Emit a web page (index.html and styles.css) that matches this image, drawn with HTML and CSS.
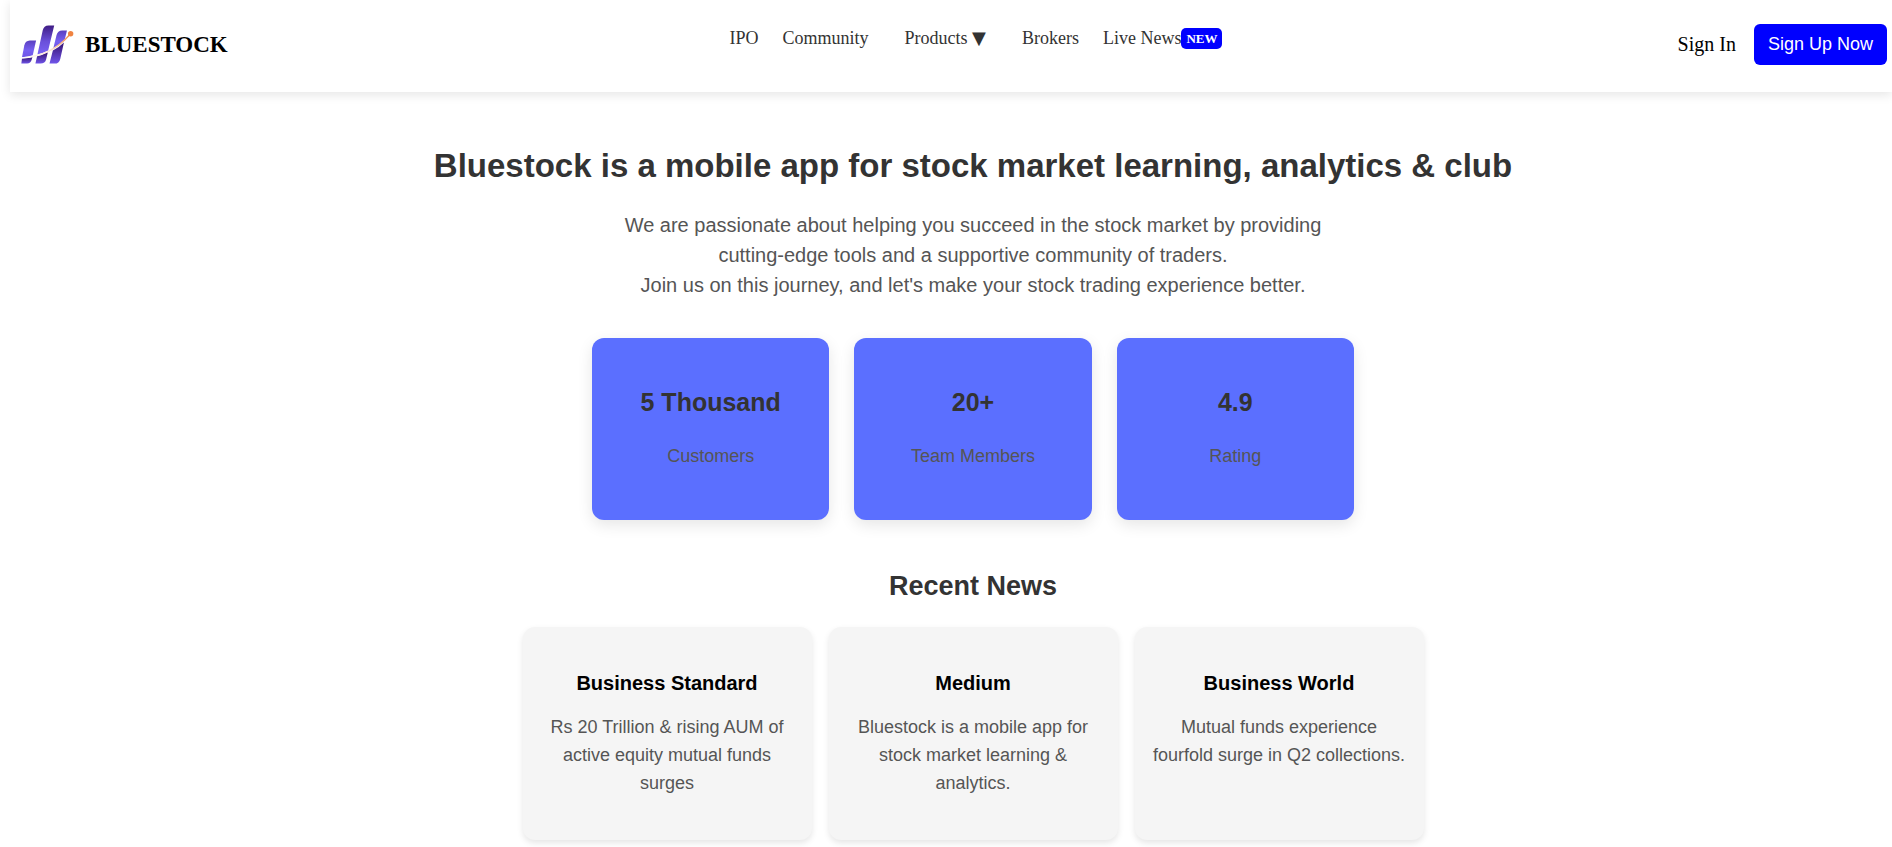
FILE: index.html
```html
<!DOCTYPE html>
<html lang="en">
<head>
<meta charset="utf-8">
<meta name="viewport" content="width=device-width, initial-scale=1">
<title>Bluestock</title>
<link rel="stylesheet" href="styles.css">
</head>
<body>
<header class="header">
  <div class="brand">
    <svg class="brand-logo" viewBox="62 77 158 116" aria-hidden="true">
      <defs>
        <linearGradient id="rise" x1="0" y1="0" x2="0" y2="1">
          <stop offset="0" stop-color="#5a3fc0"/>
          <stop offset="0.6" stop-color="#7760f2"/>
          <stop offset="1" stop-color="#6f55e6"/>
        </linearGradient>
        <linearGradient id="top" x1="0" y1="0" x2="0" y2="1">
          <stop offset="0" stop-color="#3f1c84"/>
          <stop offset="0.55" stop-color="#6a50da"/>
          <stop offset="1" stop-color="#7a62f4"/>
        </linearGradient>
        <linearGradient id="base" x1="0" y1="0" x2="0" y2="1">
          <stop offset="0" stop-color="#35126f"/>
          <stop offset="1" stop-color="#7055ea"/>
        </linearGradient>
        <linearGradient id="trail" x1="0" y1="0" x2="1" y2="0">
          <stop offset="0" stop-color="#ffffff"/>
          <stop offset="0.6" stop-color="#fde3d2"/>
          <stop offset="1" stop-color="#f28a45"/>
        </linearGradient>
      </defs>
      <path fill="url(#rise)" d="M72 137Q75 124 88 123H107L97 167Q83 172 65 173Z"/>
      <path fill="url(#base)" d="M65 177Q82 176 96 172L94 180Q91 192 80 192H63Z"/>
      <path fill="url(#top)" d="M127 92Q130 78 144 78H161L143 153Q128 161 111 165Z"/>
      <path fill="url(#base)" d="M110 170Q127 166 142 158L137 179Q134 192 120 192H105Z"/>
      <path fill="url(#rise)" d="M168 107Q171 93 185 93H199L192 122Q176 138 158 148Z"/>
      <path fill="url(#base)" d="M157 153Q175 144 190 129L179 178Q176 192 162 192H147Z"/>
      <path fill="none" stroke="url(#trail)" stroke-width="4" d="M64 175Q152 170 207 106"/>
      <circle cx="210" cy="103" r="8" fill="#f08340"/>
    </svg>
    <span class="brand-name">BLUESTOCK</span>
  </div>
  <nav class="nav">
    <a href="#ipo">IPO</a>
    <a href="#community">Community</a>
    <button class="nav-menu" type="button">Products <span class="nav-arrow">▼</span></button>
    <a href="#brokers">Brokers</a>
    <a href="#news">Live News<span class="badge">NEW</span></a>
  </nav>
  <div class="account">
    <a class="sign-in" href="#signin">Sign In</a>
    <button class="sign-up" type="button">Sign Up Now</button>
  </div>
</header>
<main class="main">
  <h1 class="title">Bluestock is a mobile app for stock market learning, analytics &amp; club</h1>
  <p class="intro">We are passionate about helping you succeed in the stock market by providing<br>cutting-edge tools and a supportive community of traders.<br>Join us on this journey, and let's make your stock trading experience better.</p>
  <section class="stats">
    <div class="stat"><h2 class="stat-value">5 Thousand</h2><p class="text">Customers</p></div>
    <div class="stat"><h2 class="stat-value">20+</h2><p class="text">Team Members</p></div>
    <div class="stat"><h2 class="stat-value">4.9</h2><p class="text">Rating</p></div>
  </section>
  <h2 class="news-heading" id="news">Recent News</h2>
  <section class="news">
    <article class="card"><h3 class="card-title">Business Standard</h3><p class="text">Rs 20 Trillion &amp; rising AUM of active equity mutual funds surges</p></article>
    <article class="card"><h3 class="card-title">Medium</h3><p class="text">Bluestock is a mobile app for stock market learning &amp; analytics.</p></article>
    <article class="card"><h3 class="card-title">Business World</h3><p class="text">Mutual funds experience fourfold surge in Q2 collections.</p></article>
  </section>
</main>
</body>
</html>
```
FILE: styles.css
```css
* {
  box-sizing: border-box;
}

body {
  margin: 0;
  background: #fff;
  color: #333;
  font-family: "Liberation Sans", Arial, sans-serif;
}

h1, h2, h3, p {
  margin: 0;
}

a {
  color: inherit;
  text-decoration: none;
}

button {
  border: 0;
  cursor: pointer;
}

.header {
  display: grid;
  grid-template-columns: 1fr auto 1fr;
  align-items: center;
  margin-left: 10px;
  padding: 24px 5px 27px 11px;
  background: #fff;
  box-shadow: 0 3px 10px rgba(0, 0, 0, 0.1);
  font-family: "Liberation Serif", "Times New Roman", serif;
}

.brand {
  display: flex;
  align-items: center;
  gap: 11px;
}

.brand-logo {
  width: 53px;
  height: 39px;
}

.brand-name {
  color: #000;
  font-size: 23px;
  font-weight: 700;
}

.nav {
  display: flex;
  align-items: baseline;
  align-self: start;
  gap: 24px;
  padding-left: 44px;
  font-size: 18px;
  line-height: 28px;
}

.nav-menu {
  padding: 0 12px;
  background: none;
  color: inherit;
  font: inherit;
}

.nav-arrow {
  font-family: "DejaVu Sans", sans-serif;
  line-height: 1;
}

.badge {
  padding: 3px 5px;
  border-radius: 5px;
  background: #00f;
  color: #fff;
  font-size: 13px;
  font-weight: 700;
  vertical-align: 1px;
}

.account {
  display: flex;
  align-items: center;
  justify-content: flex-end;
  gap: 18px;
}

.sign-in {
  color: #000;
  font-size: 20px;
}

.sign-up {
  padding: 10px 14px;
  border-radius: 6px;
  background: #00f;
  color: #fff;
  font-family: "Liberation Sans", Arial, sans-serif;
  font-size: 18px;
  line-height: 21px;
}

.main {
  padding: 54px 0 7px 54px;
  text-align: center;
}

.title {
  font-size: 33px;
  line-height: 40px;
}

.intro {
  margin-top: 24px;
  color: #555;
  font-size: 20px;
  line-height: 30px;
}

.stats {
  display: grid;
  grid-template-columns: repeat(3, 1fr);
  gap: 25px;
  max-width: 762px;
  margin: 38px auto 50px;
}

.stat {
  padding: 49px 25px 50px;
  border-radius: 12px;
  background: #5b6fff;
  box-shadow: 0 5px 15px rgba(0, 0, 0, 0.1);
}

.stat-value {
  margin-bottom: 25px;
  font-size: 25px;
  line-height: 30px;
}

.text {
  color: #555;
  font-size: 18px;
  line-height: 28px;
}

.news-heading {
  font-size: 27px;
  line-height: 32px;
}

.news {
  display: grid;
  grid-template-columns: repeat(3, 1fr);
  gap: 17px;
  max-width: 901px;
  margin: 25px auto 0;
}

.card {
  padding: 44px 16px 43px;
  border-radius: 12px;
  background: #f5f5f5;
  box-shadow: 0 3px 6px rgba(0, 0, 0, 0.1);
}

.card-title {
  margin-bottom: 18px;
  color: #000;
  font-size: 20px;
  line-height: 24px;
}
```
